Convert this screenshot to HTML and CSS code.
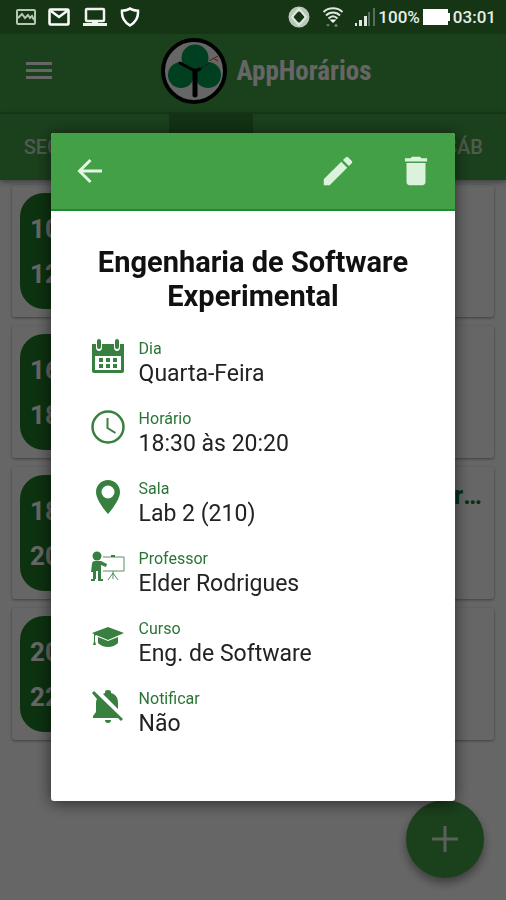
FILE: index.html
```html
<!DOCTYPE html>
<html lang="pt-BR">
<head>
    <meta charset="UTF-8">
    <meta name="viewport" content="width=device-width, initial-scale=1.0">
    <title>AppHorários</title>
    <link rel="stylesheet" href="styles.css">
</head>
<body>
    <!-- Status bar -->
    <div class="status-bar">
        <div class="status-left">
            <svg width="20" height="16" viewBox="0 0 20 16" fill="none" stroke="#b4c8b4" stroke-width="2"><rect x="1" y="1" width="18" height="14" rx="1"/><path d="M2 9l4-4 3 4 3-3 2 3 2-2 2 4"/></svg>
            <svg width="22" height="18" viewBox="0 0 22 18" fill="none" stroke="#fff" stroke-width="2.500"><rect x="1.500" y="1.500" width="19" height="15" rx="1"/><path d="M3 3l8 6 8-6"/></svg>
            <svg width="26" height="20" viewBox="0 0 26 20" fill="none" stroke="#eef4ee" stroke-width="2.500"><rect x="4" y="2" width="18" height="12" rx="1"/><path d="M1 17.500h24M10 16h6" stroke-width="3"/></svg>
            <svg width="20" height="20" viewBox="0 0 20 20" fill="none" stroke="#fff" stroke-width="2.500"><path d="M10 1.500c2 1.500 5 2 8 2.200C18.500 10 16 15 10 18.500 4 15 1.500 10 2 3.700c3-.2 6-.7 8-2.200z"/></svg>
        </div>
        <div class="status-right">
            <svg class="status-sync" width="24" height="22" viewBox="0 0 24 22" fill="none"><circle cx="12" cy="11" r="8" stroke="#b9c9b9" stroke-width="5"/><path d="M12 3l7 8-7 8-7-8z" stroke="#dfe8df" stroke-width="2"/></svg>
            <svg class="status-wifi" width="22" height="22" viewBox="0 0 22 22" fill="none" stroke="#dfe8df" stroke-width="1.800"><path d="M1.500 6c5-5 14-5 19 0M4 9.500c4-4 10-4 14 0M6.500 12.500c3-3 6-3 9 0"/><path d="M7.500 13.500h7L11 17z" fill="#fff" stroke="none"/><path d="M4 18.500h4l-2 2zM12 20.500h4l-2-3z" fill="#7d987d" stroke="none"/></svg>
            <svg width="20" height="18" viewBox="0 0 20 18" fill="#dfe8df"><path d="M0 15h2v3H0zM4 12h3v6H4zM9 8h3v10H9z"/><path d="M13 4h2v14h-2zM18 0h2v18h-2z" fill="#54705a"/></svg>
            <span>100%</span>
            <svg class="status-battery" width="27" height="16" viewBox="0 0 27 16" fill="#fff"><path d="M0 0h25v4h2v8h-2v4H0z"/></svg>
            <span>03:01</span>
        </div>
    </div>

    <!-- Toolbar -->
    <header class="toolbar">
        <button class="menu-btn" type="button" aria-label="Menu">
            <svg width="26" height="20" viewBox="0 0 26 20" fill="#fff"><path d="M0 1h26v3H0zM0 8h26v3H0zM0 15h26v3H0z"/></svg>
        </button>
        <div class="brand">
            <svg class="brand-logo" width="66" height="66" viewBox="0 0 66 66">
                <circle cx="33" cy="33" r="31" fill="#fff" stroke="#000" stroke-width="4"/>
                <g fill="#00a050"><circle cx="34" cy="20" r="13.500"/><circle cx="20" cy="37" r="13"/><circle cx="47" cy="37" r="13"/></g>
                <path d="M34 57V33" fill="none" stroke="#000" stroke-width="5" stroke-linecap="round"/>
                <path d="M34 33L19 25M34 33l5-2" fill="none" stroke="#000" stroke-width="3" stroke-linecap="round"/>
                <path d="M39 31l9-6" stroke="#333" stroke-width="1"/>
                <path d="M48 23l9-5M52 20l5 3" stroke="#f04a3a" stroke-width="1"/>
            </svg>
            <h1>AppHorários</h1>
        </div>
    </header>

    <nav class="tabs">
        <a href="#seg">SEG</a>
        <a href="#ter">TER</a>
        <a href="#qua" class="active">QUA</a>
        <a href="#qui">QUI</a>
        <a href="#sex">SEX</a>
        <a href="#sab">SÁB</a>
    </nav>

    <!-- Class list -->
    <main class="class-list">
        <article class="class-card">
            <div class="class-time"><span>10:30</span><span>12:10</span></div>
        </article>
        <article class="class-card">
            <div class="class-time"><span>16:30</span><span>18:20</span></div>
        </article>
        <article class="class-card">
            <div class="class-time"><span>18:30</span><span>20:20</span></div>
            <h2 class="class-name">Engenharia de Software Experimental</h2>
        </article>
        <article class="class-card">
            <div class="class-time"><span>20:30</span><span>22:10</span></div>
        </article>
    </main>

    <button class="fab" type="button" aria-label="Adicionar">
        <svg width="26" height="26" viewBox="0 0 26 26" fill="#e4f0e4"><path d="M11.500 0h3v11.500H26v3H14.500V26h-3V14.500H0v-3h11.500z"/></svg>
    </button>

    <!-- Class details -->
    <div class="overlay">
        <section class="dialog" role="dialog" aria-labelledby="dialog-title">
            <div class="dialog-bar">
                <button type="button" aria-label="Voltar">
                    <svg width="26" height="26" viewBox="0 0 26 26" fill="none" stroke="#e4f6e4" stroke-width="3"><path d="M25 13H3M13.500 2L2.500 13l11 11"/></svg>
                </button>
                <span class="spacer"></span>
                <button type="button" aria-label="Editar">
                    <svg width="38" height="38" viewBox="0 0 24 24" fill="#dcf2dc"><path d="M3 17.250V21h3.750L17.810 9.940l-3.750-3.750L3 17.250zM20.710 7.040a1 1 0 0 0 0-1.410l-2.340-2.340a1 1 0 0 0-1.410 0l-1.830 1.830 3.750 3.750 1.830-1.830z"/></svg>
                </button>
                <button type="button" aria-label="Excluir">
                    <svg width="38" height="38" viewBox="0 0 24 24" fill="#dcf2dc"><path d="M6 19c0 1.100.9 2 2 2h8c1.100 0 2-.9 2-2V7H6v12zM19 4h-3.500l-1-1h-5l-1 1H5v2h14V4z"/></svg>
                </button>
            </div>
            <div class="dialog-body">
                <h2 id="dialog-title">Engenharia de Software Experimental</h2>
                <ul class="details">
                    <li>
                        <svg width="34" height="36" viewBox="0 0 34 36"><path d="M1 5h32v27q0 2-2 2H3q-2 0-2-2z" fill="#38803f"/><path d="M4 17h26v14H4z" fill="#fff"/><path d="M5 0h6v8q0 4-3 4t-3-4zM23 0h6v8q0 4-3 4t-3-4z" fill="#fff"/><path d="M8 2v6M26 2v6" stroke="#38803f" stroke-width="4" stroke-linecap="round"/><path d="M8 19h4v4H8zM15 19h4v4h-4zM22 19h4v4h-4zM8 25h4v4H8zM15 25h4v4h-4zM22 25h4v4h-4z" fill="#38803f"/></svg>
                        <div><span class="label">Dia</span><span class="value">Quarta-Feira</span></div>
                    </li>
                    <li>
                        <svg width="34" height="36" viewBox="0 0 34 36" fill="none" stroke="#38803f"><circle cx="17" cy="18" r="15.500" stroke-width="2.500"/><path d="M16.500 9v10l8 5" stroke-width="2"/></svg>
                        <div><span class="label">Horário</span><span class="value">18:30 às 20:20</span></div>
                    </li>
                    <li>
                        <svg width="34" height="36" viewBox="0 0 34 36"><path d="M17 1C10.400 1 5 6.300 5 13c0 9 12 22 12 22s12-13 12-22C29 6.300 23.600 1 17 1zm0 18.500a6.500 6.500 0 1 1 0-13 6.500 6.500 0 0 1 0 13z" fill="#38803f"/></svg>
                        <div><span class="label">Sala</span><span class="value">Lab 2 (210)</span></div>
                    </li>
                    <li>
                        <svg width="34" height="36" viewBox="0 0 34 36"><circle cx="6" cy="7" r="4.500" fill="#38803f"/><path d="M1 15q0-3 3-3h6l6 3-1 3-5-2v14h2v2H7V22H5v8H4v2H0v-2h2v-7H0z" fill="#38803f"/><path d="M12 8h21v14H12M22 22v4M22 24l-5 7M22 24l5 7M22 24v6" fill="none" stroke="#5b8f60" stroke-width="1"/><path d="M20 6h4v2h-4z" fill="#38803f"/></svg>
                        <div><span class="label">Professor</span><span class="value">Elder Rodrigues</span></div>
                    </li>
                    <li>
                        <svg width="34" height="36" viewBox="0 0 34 36" fill="#38803f"><path d="M17 8l16 6-16 7-12-5-1 1v5l1 4H2l1-4v-7l-2-1z"/><path d="M7 18l10 4 10-4v6q-4 4-10 4T7 24z"/></svg>
                        <div><span class="label">Curso</span><span class="value">Eng. de Software</span></div>
                    </li>
                    <li>
                        <svg width="34" height="36" viewBox="0 0 34 36" fill="#38803f"><path d="M3 2l29 28-2 2-3-3H2v-2l3-4V14q0-3 1-4L1 4zM12 5l2-1V3q0-2 3-2t3 2v1c6 2 7 6 7 10v6zM14 31h6q0 3-3 3t-3-3z"/></svg>
                        <div><span class="label">Notificar</span><span class="value">Não</span></div>
                    </li>
                </ul>
            </div>
        </section>
    </div>
</body>
</html>
```
FILE: styles.css
```css
* {
    box-sizing: border-box;
    margin: 0;
    padding: 0;
}

body {
    font-family: Roboto, sans-serif;
    background-color: #fff;
    color: #111;
    min-height: 100vh;
}

button {
    display: flex;
    align-items: center;
    justify-content: center;
    border: none;
    background: none;
    cursor: pointer;
}

svg {
    display: block;
    flex: none;
}

/* Status bar, stays above the dimmed overlay */
.status-bar {
    position: relative;
    z-index: 3;
    display: flex;
    justify-content: space-between;
    align-items: center;
    height: 34px;
    padding: 0 10px 0 16px;
    background: #163515;
    color: #e6eee6;
    font-size: 17px;
    font-weight: 500;
}

.status-left,
.status-right {
    display: flex;
    align-items: center;
}

.status-left {
    gap: 12px;
}

.status-right {
    gap: 3px;
}

.status-sync,
.status-wifi {
    margin-right: 8px;
}

/* Toolbar */
.toolbar {
    display: flex;
    align-items: center;
    height: 80px;
    padding: 0 26px 4px;
    background: #43a047;
    border-bottom: 2px solid #388e3c;
}

.brand {
    display: flex;
    align-items: center;
    gap: 10px;
    flex: 1;
    justify-content: center;
}

.brand h1 {
    font-family: "Liberation Sans Narrow", "Roboto Condensed", Roboto, sans-serif;
    font-size: 27px;
    font-weight: bold;
    color: #fff;
}

/* Tabs */
.tabs {
    display: flex;
    height: 66px;
    background: #43a047;
    box-shadow: 0 2px 6px rgba(0, 0, 0, 0.4);
}

.tabs a {
    flex: 1;
    display: flex;
    align-items: center;
    justify-content: center;
    color: #c8e0c8;
    font-size: 20px;
    font-weight: 500;
    text-decoration: none;
}

.tabs a.active {
    background: #2f7d33;
}

/* Class list */
.class-list {
    display: flex;
    flex-direction: column;
    gap: 9px;
    padding: 5px 12px;
}

.class-card {
    display: flex;
    gap: 18px;
    height: 132px;
    padding: 8px;
    border-radius: 3px;
    box-shadow: 0 1px 3px rgba(0, 0, 0, 0.4);
}

.class-time {
    display: flex;
    flex-direction: column;
    justify-content: center;
    flex: none;
    gap: 15px;
    width: 88px;
    height: 116px;
    padding-left: 10px;
    border-radius: 24px;
    background: #207d28;
    color: #fff;
    font-size: 26px;
    line-height: 30px;
    font-weight: bold;
}

.class-name {
    padding-right: 4px;
    padding-top: 6px;
    overflow: hidden;
    white-space: nowrap;
    text-overflow: ellipsis;
    color: #0f7840;
    font-size: 25px;
}

.fab {
    position: fixed;
    right: 22px;
    bottom: 22px;
    width: 78px;
    height: 78px;
    border-radius: 50%;
    background: #43a047;
    box-shadow: 0 5px 10px rgba(0, 0, 0, 0.4);
}

/* Dialog */
.overlay {
    position: fixed;
    inset: 0;
    z-index: 2;
    display: flex;
    align-items: center;
    justify-content: center;
    padding-top: 34px;
    background: rgba(0, 0, 0, 0.6);
}

.dialog {
    width: 80%;
    border-radius: 3px;
    overflow: hidden;
    background: #fff;
    box-shadow: 0 2px 16px rgba(0, 0, 0, 0.6);
}

.dialog-bar {
    display: flex;
    align-items: center;
    gap: 40px;
    height: 78px;
    padding: 0 20px 0 26px;
    background: #43a047;
    border-bottom: 2px solid #1f8a35;
}

.spacer {
    flex: 1;
}

.dialog-body {
    padding: 34px 40px 60px;
}

.dialog-body h2 {
    margin-bottom: 26px;
    font-size: 29px;
    line-height: 34px;
    text-align: center;
    color: #111;
}

.details {
    display: flex;
    flex-direction: column;
    gap: 18px;
    list-style: none;
}

.details li {
    display: flex;
    align-items: flex-start;
    gap: 14px;
    height: 52px;
}

.label,
.value {
    display: block;
}

.label {
    color: #2a7535;
    font-size: 16px;
    line-height: 20px;
}

.value {
    color: #222;
    font-size: 23px;
    line-height: 30px;
}
```
